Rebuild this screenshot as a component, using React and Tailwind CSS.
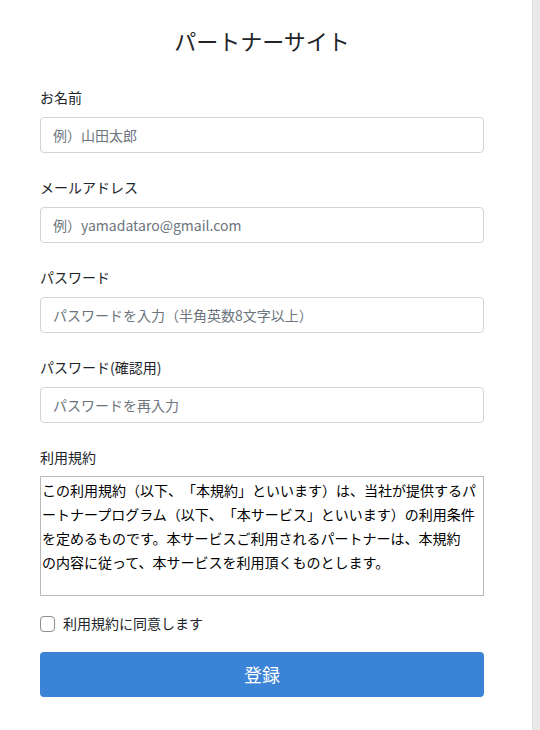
const fields = [
  { label: 'お名前', placeholder: '例）山田太郎', type: 'text' },
  { label: 'メールアドレス', placeholder: '例）yamadataro@gmail.com', type: 'email' },
  { label: 'パスワード', placeholder: 'パスワードを入力（半角英数8文字以上）', type: 'password' },
  { label: 'パスワード(確認用)', placeholder: 'パスワードを再入力', type: 'password' },
]

const terms =
  'この利用規約（以下、「本規約」といいます）は、当社が提供するパートナープログラム（以下、「本サービス」といいます）の利用条件を定めるものです。本サービスご利用されるパートナーは、本規約\nの内容に従って、本サービスを利用頂くものとします。'

function Field({ label, placeholder, type }) {
  return (
    <div className="flex flex-col">
      <label className="mb-[9px] text-[14px] leading-[21px] text-[#212529]">{label}</label>
      <input
        type={type}
        placeholder={placeholder}
        className="h-9 w-full rounded border border-[#ced4da] bg-white px-3 text-[14px] text-[#212529] outline-none placeholder:text-[#6c757d]"
      />
    </div>
  )
}

export default function App() {
  return (
    <div
      className="flex h-[730px] w-[540px] bg-white [text-spacing-trim:space-all]"
      style={{ fontFamily: '"Noto Sans CJK JP", "Noto Sans", sans-serif' }}
    >
      <main className="flex-1">
        <div className="ml-10 w-[444px] pt-[22px]">
          <h1 className="text-center text-[22px] leading-9 font-normal text-[#212529]">パートナーサイト</h1>

          <form className="mt-[29px] flex flex-col gap-6">
            {fields.map((f) => (
              <Field key={f.label} {...f} />
            ))}

            <div className="flex flex-col">
              <label className="mb-2 text-[14px] leading-[21px] text-[#212529]">利用規約</label>
              <textarea
                readOnly
                defaultValue={terms}
                className="h-[120px] w-full resize-none border border-[#b8b8b8] px-[1px] pt-[1px] text-[14px] leading-6 text-black outline-none [text-spacing-trim:space-all]"
              />
            </div>
          </form>

          <label className="mt-[17px] flex items-center gap-2">
            <span className="h-[16px] w-[15px] rounded-[4px] border border-[#8f8f8f] bg-white" />
            <span className="text-[14px] leading-[21px] text-[#212529]">利用規約に同意します</span>
          </label>

          <button className="mt-[18px] h-[45px] w-full rounded bg-[#3b83d6] text-[18px] text-white">
            登録
          </button>
        </div>
      </main>
      <div className="w-2 border-l border-[#dedede] bg-[#e9e9e9]" />
    </div>
  )
}
